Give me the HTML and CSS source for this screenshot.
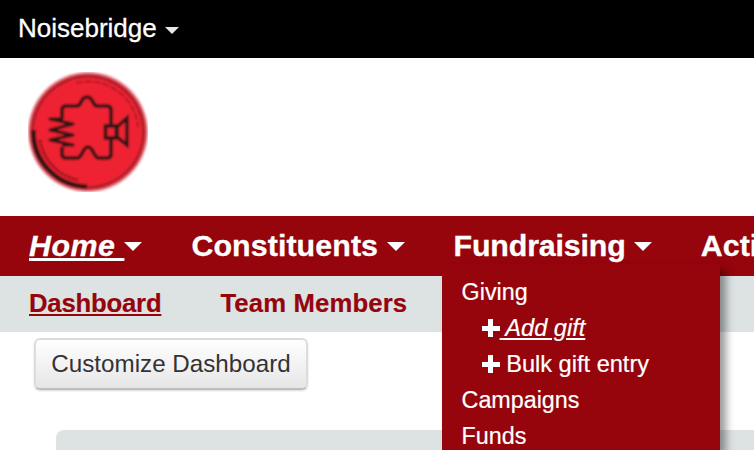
FILE: index.html
```html
<!DOCTYPE html>
<html lang="en">
<head>
<meta charset="utf-8">
<title>Noisebridge Dashboard</title>
<link rel="stylesheet" href="styles.css">
</head>
<body>
<div class="topbar">
  <span class="brand">Noisebridge</span><span class="caret caret-top"></span>
</div>
<header class="masthead">
  <svg class="logo" width="120" height="120" viewBox="0 0 120 120" aria-hidden="true">
    <defs><filter id="soft" x="-5%" y="-5%" width="110%" height="110%"><feGaussianBlur stdDeviation="0.8"/></filter></defs>
    <g filter="url(#soft)">
      <circle cx="60" cy="60" r="60" fill="#ee8d97"/>
      <circle cx="60" cy="60" r="58.500" fill="#d02a36"/>
      <circle cx="60" cy="60" r="56" fill="#8e1e26"/>
      <circle cx="60" cy="60" r="54.500" fill="#ee2030"/>
      <path d="M5.500 58 A54.500 54.500 0 0 0 59 114.500" fill="none" stroke="#1f1717" stroke-width="4.500"/>
      <path d="M12 68 A49 49 0 0 0 50 108" fill="none" stroke="#5a1619" stroke-width="2" stroke-dasharray="3 1"/>
      <path d="M48 11 A50 50 0 0 1 110 55" fill="none" stroke="#a01c26" stroke-width="1.600" stroke-dasharray="7 2"/>
      <path d="M34 47 L34 38 Q34 34 38 34 L49 34 C54 34 52 25 59 25 C66 25 64 34 69 34 L79 34 Q83 34 83 38 L83 54 M83 66 L83 82 Q83 86 79 86 L71 86 C65 86 66 75 60 75 C54 75 55 86 49 86 L38 86 Q34 86 34 82 L34 75" fill="none" stroke="#1f1717" stroke-width="3.600" stroke-linejoin="round"/>
      <path d="M35 47 L22 47 L45 52 L22 58 L45 63 L22 68 L45 73 L34 73" fill="none" stroke="#1f1717" stroke-width="3.200" stroke-linejoin="round"/>
      <rect x="77.500" y="54" width="11" height="12" fill="#ee2030" stroke="#1f1717" stroke-width="3.600"/>
      <path d="M89 55 L99 46 L99 73 L89 65 Z" fill="none" stroke="#1f1717" stroke-width="3.400"/>
    </g>
  </svg>
</header>
<nav class="mainnav">
  <ul class="mainnav-list">
    <li class="mainnav-item"><a class="mainnav-link is-current" href="#">Home <span class="caret caret-main"></span></a></li>
    <li class="mainnav-item"><a class="mainnav-link link-wide" href="#">Constituents <span class="caret caret-main"></span></a></li>
    <li class="mainnav-item has-menu"><a class="mainnav-link link-tight" href="#">Fundraising <span class="caret caret-main"></span></a>
      <ul class="menu">
        <li class="menu-item">Giving</li>
        <li class="menu-item menu-sub"><a class="menu-link is-current" href="#"><span class="plus"></span> Add gift</a></li>
        <li class="menu-item menu-sub"><a class="menu-link" href="#"><span class="plus"></span> Bulk gift entry</a></li>
        <li class="menu-item">Campaigns</li>
        <li class="menu-item">Funds</li>
      </ul>
    </li>
    <li class="mainnav-item"><a class="mainnav-link" href="#">Activities <span class="caret caret-main"></span></a></li>
  </ul>
</nav>
<nav class="subnav">
  <a class="subnav-link is-current" href="#">Dashboard</a>
  <a class="subnav-link" href="#">Team Members</a>
  <a class="subnav-link" href="#">Volunteer Times</a>
</nav>
<main class="content">
  <button class="btn" type="button">Customize Dashboard</button>
  <section class="panel"></section>
</main>
</body>
</html>
```
FILE: styles.css
```css
* { box-sizing: border-box; }
html, body { margin: 0; padding: 0; height: 450px; overflow: hidden; background: #fff; }
body { width: 754px; font-family: "Liberation Sans", Arial, sans-serif; }
a { color: inherit; text-decoration: none; }
ul { list-style: none; margin: 0; padding: 0; }

.caret { display: inline-block; width: 0; height: 0; border-style: solid; border-color: #fff transparent transparent; border-bottom-width: 0; }
.topbar { height: 58px; background: #000; color: #fff; display: flex; align-items: center; padding: 0 0 3px 18px; }
.brand { font-size: 26px; line-height: 1; -webkit-text-stroke: .3px #fff; }
.caret-top { margin-left: 8px; margin-top: 5px; border-width: 7px 7.500px 0; border-top-color: #e8e8e8; }

.masthead { height: 158px; padding: 14px 0 0 28px; }
.logo { display: block; }

.mainnav { height: 60px; background: #96040c; }
.mainnav-list { display: flex; flex-wrap: nowrap; height: 60px; padding-left: 29px; gap: 49px; }
.mainnav-item { position: relative; flex: none; }
.mainnav-link { display: block; color: #fff; font-size: 30.400px; font-weight: 700; line-height: 58px; white-space: nowrap; -webkit-text-stroke: .3px #fff; }
.mainnav-link.is-current { font-style: italic; text-decoration: underline; letter-spacing: .5px; }
.link-wide { letter-spacing: .08px; }
.link-tight { letter-spacing: -.18px; }
.caret-main { vertical-align: 5px; border-width: 9px 9px 0; }

.menu { position: absolute; top: 48px; left: -12px; width: 278px; height: 186px; padding: 10px 0 0 20px; background: #96040c; color: #fff; box-shadow: 6px 6px 8px rgba(0, 0, 0, .4); z-index: 2; letter-spacing: 0; -webkit-text-stroke: .2px #fff; }
.menu-item { font-size: 23.300px; line-height: 36px; height: 36px; white-space: nowrap; }
.menu-sub { padding-left: 20px; font-size: 23.600px; }
.menu-link.is-current { font-style: italic; text-decoration: underline; }
.plus { display: inline-block; width: 18px; height: 18px; vertical-align: -1px; background: linear-gradient(#fff, #fff) center / 18px 5px no-repeat, linear-gradient(#fff, #fff) center / 5px 18px no-repeat; }

.subnav { height: 56px; background: #dde3e3; display: flex; align-items: center; padding-left: 29px; gap: 59px; white-space: nowrap; overflow: hidden; }
.subnav-link { color: #96040c; font-size: 25.700px; font-weight: 700; line-height: 1; letter-spacing: .15px; -webkit-text-stroke: .2px #96040c; }
.subnav-link.is-current { text-decoration: underline; letter-spacing: -.2px; }

.content { padding: 6px 0 0 34px; }
.btn { display: block; width: 274px; height: 52px; padding: 0; border: 2px solid #dcdcdc; border-bottom-color: #bdbdbd; border-radius: 6px; background: linear-gradient(#fff, #e6e6e6); color: #333; font: 24.200px "Liberation Sans", Arial, sans-serif; box-shadow: 0 1px 2px rgba(0, 0, 0, .15); }
.panel { margin: 40px 0 0 22px; height: 20px; background: #dde3e3; border-radius: 8px 0 0 0; }
```
